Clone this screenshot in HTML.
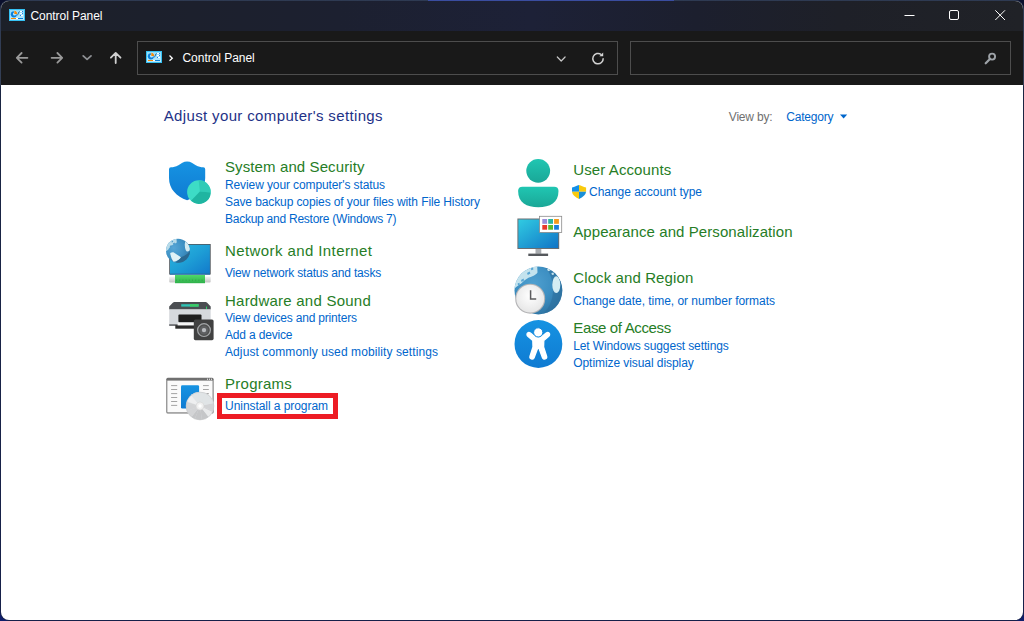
<!DOCTYPE html>
<html><head><meta charset="utf-8"><title>Control Panel</title>
<style>
html,body{margin:0;padding:0}
body{width:1024px;height:621px;overflow:hidden;background:linear-gradient(180deg,#0a0f2c 0,#0b1236 40%,#0f1e6c 100%);position:relative;font-family:"Liberation Sans",sans-serif}
#edge{position:absolute;left:0;top:0;width:1024px;height:621px;background:linear-gradient(180deg,#2e3a52 0,#343f55 85px,#1a2542 86px,#16204a 100%);border-radius:9px 9px 9px 9px}
#topline{position:absolute;left:428px;top:0;width:246px;height:1px;background:#3a4da0}
#win{position:absolute;left:1px;top:1px;width:1022px;height:619px;border-radius:8px;overflow:hidden;background:#fff}
#tb{position:absolute;left:0;top:0;width:100%;height:30px;background:linear-gradient(90deg,#1c2029 0,#1c2030 33%,#1d2137 52%,#1c1f2e 68%,#1e2028 82%,#202227 100%)}
#bar{position:absolute;left:0;top:30px;width:100%;height:54px;background:#191919}
.box{position:absolute;box-sizing:border-box;border:1px solid #4d4d4d;top:40px;height:34px}
#addr{left:136px;width:481px}
#srch{left:629px;width:381px}
.t{position:absolute;white-space:nowrap;display:block}
.hd{color:#1e3287}
.ct{color:#267d26}
.lk{color:#0066cc}
.vb{color:#707070}
.wt{color:#fff}
#red{position:absolute;left:217px;top:393px;width:121px;height:26px;box-sizing:border-box;border:5px solid #ed1c24}
svg{position:absolute;left:0;top:0}
</style></head><body>
<div id="edge"></div><div id="topline"></div>
<div id="win"><div id="tb"></div><div id="bar"></div>
<div class="box" id="addr"></div><div class="box" id="srch"></div></div>
<div id="red"></div>
<span class="t hd" style="left:163.70px;top:107.00px;font-size:15px;line-height:17px;letter-spacing:0.364px">Adjust your computer's settings</span><span class="t ct" style="left:225.00px;top:158.00px;font-size:15px;line-height:17px;letter-spacing:0.108px">System and Security</span><span class="t lk" style="left:225.00px;top:177.75px;font-size:12px;line-height:14px;letter-spacing:-0.108px">Review your computer's status</span><span class="t lk" style="left:225.00px;top:194.75px;font-size:12px;line-height:14px;letter-spacing:-0.104px">Save backup copies of your files with File History</span><span class="t lk" style="left:225.00px;top:211.50px;font-size:12px;line-height:14px;letter-spacing:-0.250px">Backup and Restore (Windows 7)</span><span class="t ct" style="left:225.00px;top:241.50px;font-size:15px;line-height:17px;letter-spacing:0.408px">Network and Internet</span><span class="t lk" style="left:225.00px;top:265.75px;font-size:12px;line-height:14px;letter-spacing:-0.177px">View network status and tasks</span><span class="t ct" style="left:225.00px;top:291.50px;font-size:15px;line-height:17px;letter-spacing:0.234px">Hardware and Sound</span><span class="t lk" style="left:225.00px;top:311.00px;font-size:12px;line-height:14px;letter-spacing:-0.189px">View devices and printers</span><span class="t lk" style="left:225.00px;top:328.00px;font-size:12px;line-height:14px;letter-spacing:-0.172px">Add a device</span><span class="t lk" style="left:225.00px;top:344.75px;font-size:12px;line-height:14px;letter-spacing:0.097px">Adjust commonly used mobility settings</span><span class="t ct" style="left:225.10px;top:374.75px;font-size:15px;line-height:17px;letter-spacing:0.238px">Programs</span><span class="t lk" style="left:225.10px;top:399.00px;font-size:12px;line-height:14px;letter-spacing:-0.064px">Uninstall a program</span><span class="t ct" style="left:573.25px;top:160.50px;font-size:15px;line-height:17px;letter-spacing:0.107px">User Accounts</span><span class="t lk" style="left:589.00px;top:184.75px;font-size:12px;line-height:14px;letter-spacing:-0.023px">Change account type</span><span class="t ct" style="left:573.25px;top:223.00px;font-size:15px;line-height:17px;letter-spacing:0.084px">Appearance and Personalization</span><span class="t ct" style="left:573.25px;top:269.25px;font-size:15px;line-height:17px;letter-spacing:0.106px">Clock and Region</span><span class="t lk" style="left:573.25px;top:293.50px;font-size:12px;line-height:14px;letter-spacing:-0.029px">Change date, time, or number formats</span><span class="t ct" style="left:573.25px;top:319.25px;font-size:15px;line-height:17px;letter-spacing:-0.351px">Ease of Access</span><span class="t lk" style="left:573.25px;top:339.25px;font-size:12px;line-height:14px;letter-spacing:-0.120px">Let Windows suggest settings</span><span class="t lk" style="left:573.25px;top:355.75px;font-size:12px;line-height:14px;letter-spacing:-0.070px">Optimize visual display</span><span class="t vb" style="left:728.80px;top:110.20px;font-size:12px;line-height:14px;letter-spacing:-0.192px">View by:</span><span class="t lk" style="left:786.20px;top:110.20px;font-size:12px;line-height:14px;letter-spacing:-0.200px">Category</span><span class="t wt" style="left:182.50px;top:50.90px;font-size:12px;line-height:14px;letter-spacing:-0.043px">Control Panel</span><span class="t wt" style="left:30.50px;top:9.30px;font-size:12px;line-height:14px;letter-spacing:-0.060px">Control Panel</span>
<svg width="1024" height="621" viewBox="0 0 1024 621">
<defs>
<linearGradient id="gShield" x1="0" y1="0" x2="0" y2="1"><stop offset="0" stop-color="#1693e2"/><stop offset="1" stop-color="#0f7bd2"/></linearGradient>
<linearGradient id="gMon" x1="0" y1="0" x2="1" y2="1"><stop offset="0" stop-color="#2cb8e0"/><stop offset="0.5" stop-color="#1e9fd6"/><stop offset="1" stop-color="#127acb"/></linearGradient>
<linearGradient id="gMon2" x1="0" y1="0" x2="1" y2="1"><stop offset="0" stop-color="#30cbe2"/><stop offset="1" stop-color="#1174c6"/></linearGradient>
<linearGradient id="gTeal" x1="0" y1="0" x2="0" y2="1"><stop offset="0" stop-color="#20c6b2"/><stop offset="1" stop-color="#1aa797"/></linearGradient>
<linearGradient id="gGreen" x1="0" y1="0" x2="0" y2="1"><stop offset="0" stop-color="#4fd86a"/><stop offset="1" stop-color="#2fb04a"/></linearGradient>
<linearGradient id="gEnd" x1="0" y1="0" x2="0" y2="1"><stop offset="0" stop-color="#f4f4f4"/><stop offset="1" stop-color="#c4c4c4"/></linearGradient>
<radialGradient id="gGlobe" cx="0.32" cy="0.38" r="0.75"><stop offset="0" stop-color="#57a6d6"/><stop offset="0.55" stop-color="#3f92c5"/><stop offset="1" stop-color="#2f79aa"/></radialGradient>
<linearGradient id="gCP" x1="0" y1="0" x2="0" y2="1"><stop offset="0" stop-color="#8fdcfa"/><stop offset="1" stop-color="#b9e8fb"/></linearGradient>
<radialGradient id="gGlobe2" cx="0.4" cy="0.35" r="0.75"><stop offset="0" stop-color="#4fa0d0"/><stop offset="0.5" stop-color="#3d8fc2"/><stop offset="1" stop-color="#2c6f9d"/></radialGradient>
<radialGradient id="gFace" cx="0.5" cy="0.4" r="0.7"><stop offset="0" stop-color="#ffffff"/><stop offset="1" stop-color="#e2e2e2"/></radialGradient>
<clipPath id="cGlobe2"><circle cx="538.4" cy="290.5" r="23.9"/></clipPath>
<clipPath id="cGlobe1"><circle cx="178" cy="250.7" r="12"/></clipPath>
<clipPath id="cCD"><circle cx="200" cy="406" r="13.9"/></clipPath>
<g id="cp">
  <rect x="0" y="0" width="16" height="12" fill="#35c1f3"/>
  <rect x="1" y="1" width="14" height="10" fill="url(#gCP)"/>
  <circle cx="4.9" cy="5.3" r="3.1" fill="#0b80da"/>
  <circle cx="5.5" cy="4.9" r="1.5" fill="#c9ecfb"/>
  <path d="M4.9 1.2 L4.9 5.5 L8.9 5.5 L8.9 3.5 L6.5 1.2 Z" fill="#a8e2fa"/>
  <path d="M5.3 1.7 L5.3 5 L8.3 5 C8.2 3.2 7 1.9 5.3 1.7 Z" fill="#f58a07"/>
  <path d="M8.3 6 C9.6 6 9.2 2.6 10.6 2.6" stroke="#17609f" stroke-width="1" fill="none"/>
  <rect x="11" y="2" width="3" height="1" fill="#fff"/><rect x="13" y="2" width="1" height="1" fill="#2a7de0"/>
  <rect x="11" y="4" width="3" height="1" fill="#fff"/><rect x="13" y="4" width="1" height="1" fill="#2a7de0"/>
  <rect x="11" y="6" width="3" height="1" fill="#2a7de0"/><rect x="12" y="6" width="2" height="1" fill="#fff"/>
  <rect x="2" y="9" width="5" height="1" fill="#f58a07"/>
  <rect x="7" y="9" width="2" height="1" fill="#fff"/>
  <rect x="9" y="9" width="5" height="1" fill="#0b7fd8"/>
</g>
</defs>

<!-- title bar -->
<use href="#cp" x="9" y="9"/>
<path d="M904.5 15.5 H914.5" stroke="#fff" stroke-width="1" fill="none"/>
<rect x="949.5" y="10.5" width="9" height="9" rx="1.5" stroke="#fff" stroke-width="1" fill="none"/>
<path d="M995.3 10.3 L1005 20 M1005 10.3 L995.3 20" stroke="#fff" stroke-width="1" fill="none"/>

<!-- nav -->
<g stroke="#9a9a9a" stroke-width="1.8" fill="none" stroke-linecap="round" stroke-linejoin="round">
  <path d="M27.4 57.8 H16.8 M21.6 53 L16.8 57.8 L21.6 62.6"/>
  <path d="M51.6 57.8 H62.2 M57.4 53 L62.2 57.8 L57.4 62.6"/>
  <path d="M83.2 55.9 L87.1 59.4 L91 55.9" stroke="#8e9094"/>
  <path d="M115.7 63 V52.9 M110.9 57.7 L115.7 52.9 L120.5 57.7" stroke="#d0d0d0"/>
</g>
<use href="#cp" x="146" y="51"/>
<path d="M169.5 55.6 L172.3 58.2 L169.5 60.8" stroke="#fff" stroke-width="1.3" fill="none"/>
<path d="M557.3 57 L561.2 61 L565.1 57" stroke="#c8c8c8" stroke-width="1.2" fill="none" stroke-linecap="round" stroke-linejoin="round"/>
<!-- refresh -->
<path d="M603.2 58.3 A5.2 5.2 0 1 1 601.2 54.5" stroke="#d2d2d2" stroke-width="1.5" fill="none"/>
<path d="M603.2 52.6 V56.3 H599.3 Z" fill="#d8d8d8"/>
<!-- search -->
<circle cx="992.1" cy="56.6" r="3" stroke="#9ea3a8" stroke-width="1.9" fill="none"/>
<path d="M989.9 58.9 L985.7 63.3" stroke="#9ea3a8" stroke-width="2.2" stroke-linecap="round"/>

<!-- view-by triangle -->
<path d="M840 114.5 H847.2 L843.6 118.6 Z" fill="#0066cc"/>

<!-- System and Security -->
<path d="M187.1 161.6 C183.4 161.6 181.2 163.8 178.4 165.3 C175.6 166.8 173.4 167.3 171 167.3 Q169 167.3 169 169.3 V178 C169 189 176.5 196.5 187.1 200.2 C197.6 196.5 205.2 189 205.2 178 V169.3 Q205.2 167.3 203.2 167.3 C200.8 167.3 198.6 166.8 195.8 165.3 C193 163.8 190.8 161.6 187.1 161.6 Z" fill="url(#gShield)"/>
<circle cx="198.9" cy="192" r="11.8" fill="#3ddcc6"/>
<path d="M199.9 191.6 L198.6 180.2 A11.8 11.8 0 0 1 210.7 192.4 Z" fill="#30cbb6"/>
<path d="M199.9 191.6 L210.7 192.4 A11.8 11.8 0 0 1 191 200.8 Z" fill="#1fb5a1"/>

<!-- Network and Internet -->
<rect x="169.2" y="244" width="41.5" height="30.5" fill="#50565c"/>
<rect x="169.9" y="273.6" width="40.1" height="1" fill="#0f69b6"/>
<rect x="170" y="244.8" width="39.9" height="28.9" fill="url(#gMon)"/>
<rect x="169.2" y="276.4" width="41.5" height="6" rx="1" fill="url(#gEnd)"/>
<rect x="175" y="275" width="30" height="8.2" fill="url(#gGreen)"/>
<path d="M176 280.2 H204" stroke="#2a9a40" stroke-width="0.8" stroke-dasharray="1 2.2"/>
<circle cx="178" cy="250.7" r="12" fill="url(#gGlobe)"/>
<g clip-path="url(#cGlobe1)">
  <path d="M165 252 L165 238 L176.4 238 L176.8 242.6 C175.6 243.6 174.6 243.8 173.6 244.3 C172.3 245 171.2 245.8 170.3 246.7 C169.4 247.7 168.6 248.8 168.2 249.8 Z" fill="#b9dcea"/>
  <path d="M169.6 246.2 L171.2 245 L172 246.2 L170.6 247.4 Z M172.8 243.6 L174.6 242.6 L175 243.8 L173.4 244.8 Z M171.4 241.6 L172.8 240.8 L173.2 242 L171.8 242.6Z" fill="#4f9ccb"/>
  <path d="M185.2 241.6 C187 242.6 188.6 244.2 189.4 245.8 C190.2 247.4 190.2 249.4 189.6 250.4 C188.8 251.4 187.6 251.8 186.8 251.4 C186 250.6 185.4 249.6 185.2 248.4 C185 246.6 184.6 245.2 184.8 244 Z" fill="#d3ebf2"/>
  <path d="M170.2 253 C171.4 252.4 172.8 252.2 173.8 252.5 L181 257.3 C180.4 258.6 179.2 259.6 178 260.3 C176.6 261 175 261.6 173.6 261.7 C172.6 260.4 171.6 258.8 171.2 257.2 C170.8 255.8 170.2 254.4 170.2 253 Z" fill="#e1f2f6"/>
  <path d="M181 257.3 C184 256.2 187.4 254.2 189.8 251.2 L192 256 L184 264 L175 264 L176 262.2 C176.8 261.6 177.4 261 178 260.3 C179.2 259.6 180.4 258.6 181 257.3 Z" fill="#2a6890"/>
</g>
<!-- Hardware and Sound -->
<path d="M174.5 302 H205.5 Q206.5 302 207.2 302.8 L210.7 306.6 V309.5 H169.2 V306.6 L172.8 302.8 Q173.5 302 174.5 302 Z" fill="#4b4e52"/>
<rect x="181.2" y="304.2" width="17.4" height="2.4" fill="#2fc2b4"/>
<rect x="190" y="304.2" width="8.6" height="2.4" fill="#3ccc62"/>
<rect x="206" y="306.6" width="1" height="2.4" fill="#2fd46a"/>
<rect x="169.2" y="309.5" width="41.5" height="16.3" fill="#d6d9dd"/>
<rect x="169.2" y="324.3" width="41.5" height="1.5" fill="#5a5c60"/>
<rect x="178.4" y="314.6" width="23.1" height="7.6" rx="1" fill="#1f1f1f"/>
<rect x="175.3" y="325.2" width="26" height="3.5" fill="#2c2c2c"/>
<rect x="177.6" y="322.6" width="24" height="2.8" fill="#f6f6f6"/>
<rect x="193.8" y="319.5" width="19.8" height="20.7" rx="1.6" fill="#414141"/>
<circle cx="204" cy="330.1" r="6.4" fill="#505050" stroke="#a4a6a8" stroke-width="1.2"/>
<circle cx="204" cy="330.1" r="4.4" fill="#5f6062"/>
<circle cx="204" cy="330.1" r="2.2" fill="#b9bbbf"/>

<!-- Programs -->
<rect x="166.3" y="377.7" width="47.3" height="35.7" rx="1.5" fill="#707070"/>
<rect x="167.3" y="380.6" width="45.3" height="31.8" fill="#fafafa"/>
<g fill="#fff"><rect x="207" y="378.7" width="1" height="1"/><rect x="209" y="378.7" width="1" height="1"/><rect x="211" y="378.7" width="1" height="1"/></g>
<rect x="181" y="385.2" width="18.1" height="23.4" rx="1.3" fill="url(#gShield)"/>
<g stroke="#9a9a9a" stroke-width="0.9">
 <path d="M171.1 385.6 h6.1 M171.1 389.5 h6.1 M171.1 393.6 h6.1 M171.1 397.5 h6.1 M171.1 401.5 h6.1 M171.1 405.4 h6.1"/>
 <path d="M203 385.6 h5.8 M203 389.5 h5.8 M203 393.6 h5.8"/>
</g>
<circle cx="200" cy="406" r="13.9" fill="#dfe1e3"/>
<g clip-path="url(#cCD)">
<path d="M200 406 L209.4 418.0 L202.1 421.1 Z" fill="#c5c6c8"/>
<path d="M200 406 L202.1 421.1 L194.3 420.2 Z" fill="#c5c6c8"/>
<path d="M200 406 L194.3 420.2 L190.6 418.0 Z" fill="#c5c6c8"/>
<path d="M200 406 L190.6 418.0 L185.8 411.7 Z" fill="#d3d4d6"/>
<path d="M200 406 L185.8 411.7 L184.9 403.9 Z" fill="#d3d4d6"/>
<path d="M200 406 L184.9 403.9 L185.3 401.8 Z" fill="#d3d4d6"/>
<path d="M200 406 L215.0 402.8 L214.5 410.7 Z" fill="#d2d3d5"/>
<path d="M200 406 L214.5 410.7 L213.7 412.7 Z" fill="#d2d3d5"/>
<path d="M200 406 L213.7 412.7 L209.4 418.0 Z" fill="#e9eaeb"/>
<path d="M200 406 L185.6 400.8 L190.2 394.3 Z" fill="#eeeff0"/>
<path d="M200 406 L190.2 394.3 L190.6 394.0 Z" fill="#eeeff0"/>
<path d="M200 406 L190.6 394.0 L197.9 390.9 Z" fill="#e0e4e6"/>
<path d="M200 406 L197.9 390.9 L205.7 391.8 Z" fill="#e0e4e6"/>
<path d="M200 406 L205.7 391.8 L212.0 396.6 Z" fill="#e0e4e6"/>
<path d="M200 406 L212.0 396.6 L215.0 402.8 Z" fill="#e0e4e6"/>
</g>
<circle cx="200" cy="406" r="13.9" fill="none" stroke="#c6c8ca" stroke-width="0.6"/>
<circle cx="200" cy="406" r="4" fill="#f0f0f0" stroke="#d4d4d4" stroke-width="0.6"/>
<circle cx="200" cy="406" r="1.7" fill="#fff"/>

<!-- User Accounts -->
<circle cx="538.2" cy="170.8" r="11.9" fill="url(#gTeal)"/>
<path d="M522.5 186.7 H554.1 Q558.5 186.7 558.5 191 C558.5 202.6 550 207.2 538.3 207.2 C526.5 207.2 518.1 202.6 518.1 191 Q518.1 186.7 522.5 186.7 Z" fill="url(#gTeal)"/>
<!-- UAC shield -->
<path d="M579 185 C577 185.6 574.5 186.8 572 187.6 V191.8 H579 Z" fill="#1490e8"/>
<path d="M579 185 C581 185.6 583.5 186.8 586.1 187.6 V191.8 H579 Z" fill="#f9ca0e"/>
<path d="M572 191.8 H579 V198.9 C575 197.2 572.4 194.8 572 191.8 Z" fill="#f9ca0e"/>
<path d="M586.1 191.8 H579 V198.9 C583 197.2 585.7 194.8 586.1 191.8 Z" fill="#1a8fd8"/>

<!-- Appearance -->
<rect x="517.4" y="218.5" width="41.8" height="30.5" fill="#6a6e72"/>
<rect x="518.4" y="219.5" width="39.8" height="28.5" fill="url(#gMon2)"/>
<rect x="535.5" y="249" width="5.8" height="4.8" fill="#a9acb0"/>
<rect x="528.3" y="253.6" width="19.8" height="2.4" fill="#55585c"/>
<rect x="539.6" y="216.3" width="22.1" height="16.1" fill="#fff" stroke="#8a8a8a" stroke-width="0.8"/>
<rect x="542.3" y="219" width="4.8" height="4.8" fill="#9b8ddb"/>
<rect x="548.2" y="219" width="4.8" height="4.8" fill="#2bb5a0"/>
<rect x="554.1" y="219" width="4.8" height="4.8" fill="#f59a1a"/>
<rect x="542.3" y="225" width="4.8" height="4.7" fill="#e8382d"/>
<rect x="548.2" y="225" width="4.8" height="4.7" fill="#5cb82e"/>
<rect x="554.1" y="225" width="4.8" height="4.7" fill="#1a7fdb"/>

<!-- Clock and Region -->
<circle cx="538.4" cy="290.5" r="23.9" fill="url(#gGlobe2)"/>
<g clip-path="url(#cGlobe2)">
  <path d="M512 290 L512 262 L537 262 L537.5 272.6 C536.6 274 535.4 274.8 534.1 275.5 C532 276.6 529.4 277.2 527.3 278.4 C525.4 279.4 523.8 280.8 522.5 282.3 C521 283.6 519.8 284.4 518.6 285.2 C517.2 286.2 515.8 287.2 514.8 288.2 Z" fill="#c4e3ee"/>
  <path d="M527 273 L529.6 271.6 L530.4 273.6 L527.8 275 Z M521 280 L523.6 278.6 L524 280.4 L521.6 282 Z M530.8 268.4 L533 267.6 L533.4 269.4 L531.4 270.2 Z M517.6 283.6 L519.4 282.8 L519.8 284.4 L518 285.2 Z" fill="#58a5d3"/>
  <path d="M543 266 C549 270 552.6 278 553 288 C553.4 300 549 310 540 316 L556 312 L564 296 L562 276 L552 266 Z" fill="#2b6d9a" opacity="0.55"/>
  <ellipse cx="556.3" cy="284.7" rx="4" ry="8.4" fill="#d4edf3"/>
  <path d="M547 269 L549.6 268.4 L550.4 270.4 L548 271.2 Z M551.4 273 L553.6 272.6 L554 274.6 L552 275 Z" fill="#c4e3ee"/>
</g>
<circle cx="530.2" cy="298.7" r="15" fill="#b4b4b6"/>
<circle cx="530.2" cy="298.7" r="13.9" fill="url(#gFace)"/>
<path d="M530.6 290.3 V298.9 H536.2" stroke="#5c5c5e" stroke-width="1.5" fill="none"/>

<!-- Ease of Access -->
<circle cx="538.4" cy="344" r="23.9" fill="url(#gShield)"/>
<path d="M527.4 333.2 C528.4 332.2 529.6 332.4 530.4 333 L535 336.8 C537 338.2 539.6 338.2 541.6 336.8 L546.2 333 C547 332.4 548.4 332.2 549.2 333.2 C550 334.2 549.6 335.6 548.8 336.2 L543.8 340.4 L543.6 347 L546.6 356.2 C547 357.6 546.4 358.6 545.2 359 C544 359.4 542.8 358.8 542.4 357.6 L538.3 346.6 L534.2 357.6 C533.8 358.8 532.6 359.4 531.4 359 C530.2 358.6 529.6 357.6 530 356.2 L533 347 L532.8 340.4 L527.8 336.2 C527 335.6 526.6 334.2 527.4 333.2 Z" fill="#fff" stroke="#fff" stroke-width="1.3" stroke-linejoin="round"/>
<circle cx="538.2" cy="332.4" r="4.6" fill="#fff" stroke="#1389dd" stroke-width="1"/>
</svg>

</body></html>
